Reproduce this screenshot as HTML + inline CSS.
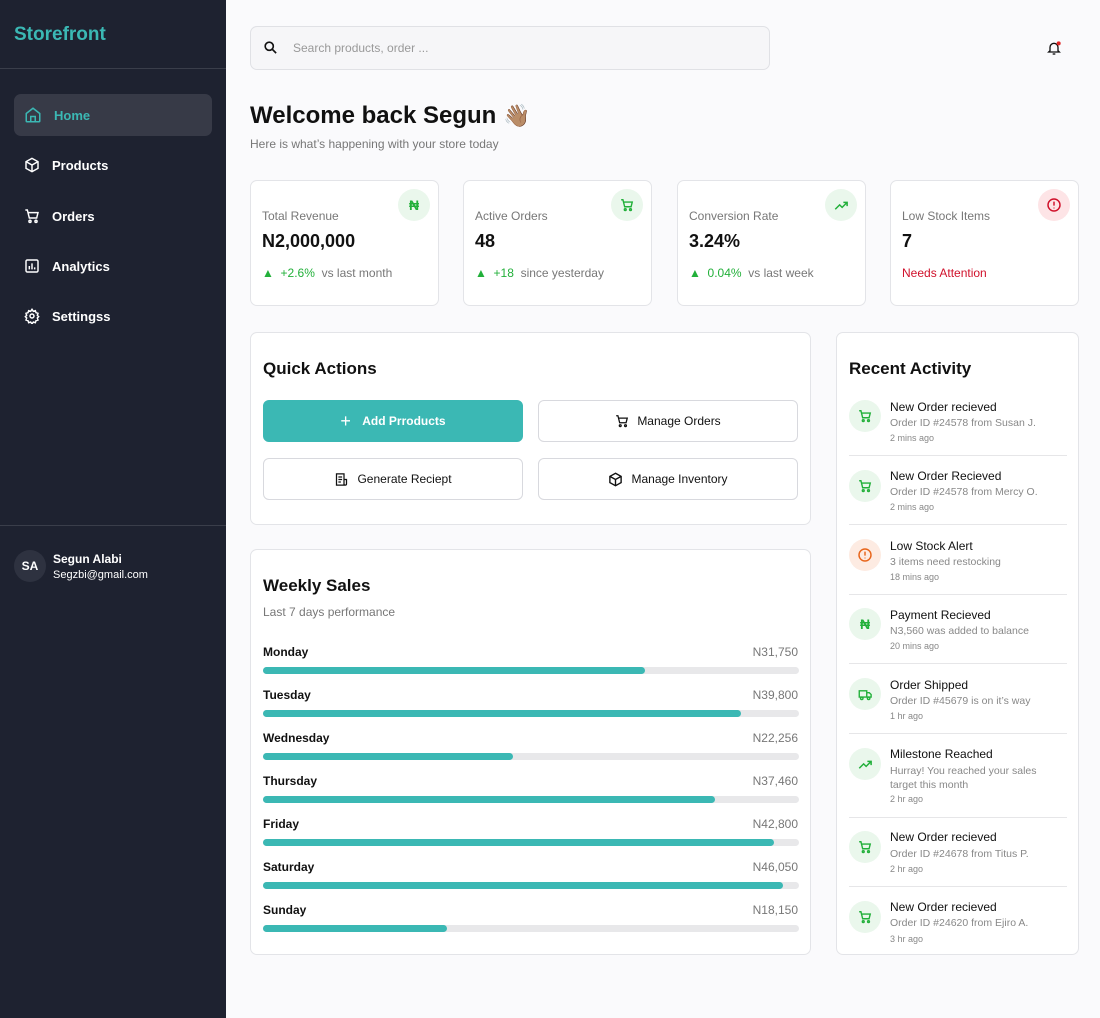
<!DOCTYPE html>
<html><head><meta charset="utf-8"><style>
*{box-sizing:border-box;margin:0;padding:0}
body{width:1100px;height:1018px;background:#fafafc;font-family:"Liberation Sans",sans-serif;color:#111;position:relative;overflow:hidden}
.sb{position:absolute;left:0;top:0;width:226px;height:1018px;background:#1e2230}
.logo{position:absolute;left:14px;top:24px;color:#3bb8b4;font-weight:bold;font-size:19px}
.hr{position:absolute;left:0;width:226px;height:1px;background:#3a3e4a}
.nav{position:absolute;left:14px;width:198px;height:42px;border-radius:7px;display:flex;align-items:center;padding-left:10px;color:#fff;font-weight:bold;font-size:13px}
.nav svg{margin-right:12px}
.nav.act{background:#373a47;color:#3bb8b4}
.card{position:absolute;background:#fff;border:1px solid #e3e4e8;border-radius:7px}
.abs{position:absolute}
.muted{color:#777}
.btn{position:absolute;width:260px;height:42px;border:1px solid #d8d9de;border-radius:6px;display:flex;align-items:center;justify-content:center;font-size:12px;gap:8px;background:#fff}
.ic{position:absolute;width:32px;height:32px;border-radius:50%;display:flex;align-items:center;justify-content:center}
.g{background:#eaf7ec;color:#22b03a}
.row .lbl{position:absolute;left:12px;font-size:12px;font-weight:bold}
.row .val{position:absolute;right:12px;font-size:12px;color:#777}
.track{position:absolute;left:12px;width:536px;height:7px;border-radius:4px;background:#e8e8ea}
.fill{height:7px;border-radius:4px;background:#3bb8b4}
.act{}
.ai{position:absolute;left:12px}
.at{position:absolute;left:53px;font-size:12px}
.as{position:absolute;left:53px;font-size:10.5px;color:#888;line-height:14px}
.ag{position:absolute;left:53px;font-size:9px;color:#888}
.dv{position:absolute;left:12px;width:218px;height:1px;background:#e6e6e8}
</style></head><body>
<div class="sb">
<div class="logo">Storefront</div>
<div class="hr" style="top:68px"></div>
<div class="nav act" style="top:94px"><svg width="18" height="18" viewBox="0 0 24 24" fill="none" stroke="#3bb8b4" stroke-width="2"><path d="M3 10l9-7 9 7v10a1 1 0 01-1 1H4a1 1 0 01-1-1z"/><path d="M9 21v-7h6v7"/></svg>Home</div>
<div class="nav" style="top:144px"><svg width="16" height="16" viewBox="0 0 24 24" fill="none" stroke="#fff" stroke-width="2.2"><path d="M12 2l9 5v10l-9 5-9-5V7z"/><path d="M3 7l9 5 9-5M12 12v10"/></svg>Products</div>
<div class="nav" style="top:195px"><svg width="16" height="16" viewBox="0 0 24 24" fill="none" stroke="#fff" stroke-width="2.2"><path d="M2 3h3l3 12h11l2-8H6"/><circle cx="9" cy="20" r="1.6"/><circle cx="18" cy="20" r="1.6"/></svg>Orders</div>
<div class="nav" style="top:245px"><svg width="16" height="16" viewBox="0 0 24 24" fill="none" stroke="#fff" stroke-width="2.2"><rect x="3" y="3" width="18" height="18" rx="2"/><path d="M8 17v-5M12 17V8M16 17v-3"/></svg>Analytics</div>
<div class="nav" style="top:295px"><svg width="16" height="16" viewBox="0 0 24 24" fill="none" stroke="#fff" stroke-width="2.2"><circle cx="12" cy="12" r="3"/><path d="M12 2l2 3 3-1 1 3 3 1-1 3 2 2-2 2 1 3-3 1-1 3-3-1-2 3-2-3-3 1-1-3-3-1 1-3-2-2 2-2-1-3 3-1 1-3 3 1z"/></svg>Settingss</div>
<div class="hr" style="top:525px"></div>
<div class="abs" style="left:14px;top:550px;width:32px;height:32px;border-radius:50%;background:#2e3240;color:#fff;font-weight:bold;font-size:12px;display:flex;align-items:center;justify-content:center">SA</div>
<div class="abs" style="left:53px;top:552px;color:#fff;font-weight:bold;font-size:12px">Segun Alabi</div>
<div class="abs" style="left:53px;top:569px;color:#fff;font-size:11px">Segzbi@gmail.com</div>
</div>

<div class="abs" style="left:250px;top:26px;width:520px;height:44px;border:1px solid #e0e1e5;border-radius:7px;background:#f6f6f8"></div>
<svg class="abs" style="left:263px;top:40px" width="15" height="15" viewBox="0 0 24 24" fill="none" stroke="#111" stroke-width="2.6"><circle cx="10" cy="10" r="6.5"/><path d="M15 15l6 6"/></svg>
<div class="abs" style="left:293px;top:41px;font-size:12px;color:#999">Search products, order ...</div>
<svg class="abs" style="left:1046px;top:40px" width="16" height="16" viewBox="0 0 24 24" fill="none" stroke="#111" stroke-width="2"><path d="M6 16V11a6 6 0 0112 0v5l2 2H4z"/><path d="M10 21h4"/><circle cx="19" cy="5" r="3" fill="#e02424" stroke="none"/></svg>

<div class="abs" style="left:250px;top:102px;font-size:24px;font-weight:bold">Welcome back Segun <span style="font-size:22px">👋🏽</span></div>
<div class="abs muted" style="left:250px;top:137px;font-size:12px">Here is what’s happening with your store today</div>

<div class="card" style="left:250px;top:180px;width:189px;height:126px">
<div class="ic g" style="left:147px;top:8px;font-weight:bold;font-size:14px">₦</div>
<div class="abs muted" style="left:11px;top:28px;font-size:12px">Total Revenue</div>
<div class="abs" style="left:11px;top:50px;font-size:18px;font-weight:bold">N2,000,000</div>
<div class="abs" style="left:11px;top:85px;font-size:12px"><span style="color:#22b03a">▲ &nbsp;+2.6%</span> <span class="muted">&nbsp;vs last month</span></div></div>
<div class="card" style="left:463px;top:180px;width:189px;height:126px">
<div class="ic g" style="left:147px;top:8px"><svg width="14" height="14" viewBox="0 0 24 24" fill="none" stroke="#22b03a" stroke-width="2.4"><path d="M2 3h3l3 12h11l2-8H6"/><circle cx="9" cy="20" r="1.6"/><circle cx="18" cy="20" r="1.6"/></svg></div>
<div class="abs muted" style="left:11px;top:28px;font-size:12px">Active Orders</div>
<div class="abs" style="left:11px;top:50px;font-size:18px;font-weight:bold">48</div>
<div class="abs" style="left:11px;top:85px;font-size:12px"><span style="color:#22b03a">▲ &nbsp;+18</span> <span class="muted">&nbsp;since yesterday</span></div></div>
<div class="card" style="left:677px;top:180px;width:189px;height:126px">
<div class="ic g" style="left:147px;top:8px"><svg width="15" height="15" viewBox="0 0 24 24" fill="none" stroke="#22b03a" stroke-width="2.4"><path d="M2 18l7-7 4 4 8-8M15 7h6v6"/></svg></div>
<div class="abs muted" style="left:11px;top:28px;font-size:12px">Conversion Rate</div>
<div class="abs" style="left:11px;top:50px;font-size:18px;font-weight:bold">3.24%</div>
<div class="abs" style="left:11px;top:85px;font-size:12px"><span style="color:#22b03a">▲ &nbsp;0.04%</span> <span class="muted">&nbsp;vs last week</span></div></div>
<div class="card" style="left:890px;top:180px;width:189px;height:126px">
<div class="ic" style="left:147px;top:8px;background:#fde4e6"><svg width="16" height="16" viewBox="0 0 24 24" fill="none" stroke="#d0112b" stroke-width="2.2"><circle cx="12" cy="12" r="9"/><path d="M12 7v6M12 16v1"/></svg></div>
<div class="abs muted" style="left:11px;top:28px;font-size:12px">Low Stock Items</div>
<div class="abs" style="left:11px;top:50px;font-size:18px;font-weight:bold">7</div>
<div class="abs" style="left:11px;top:85px;font-size:12px;color:#d0112b">Needs Attention</div></div>

<div class="card" style="left:250px;top:332px;width:561px;height:193px">
<div class="abs" style="left:12px;top:26px;font-size:17px;font-weight:bold">Quick Actions</div>
<div class="btn" style="left:12px;top:67px;background:#3bb8b4;border-color:#3bb8b4;color:#fff;font-weight:bold"><span style="font-size:18px;font-weight:normal">+</span>&nbsp;Add Prroducts</div>
<div class="btn" style="left:287px;top:67px"><svg width="14" height="14" viewBox="0 0 24 24" fill="none" stroke="#111" stroke-width="2.2"><path d="M2 3h3l3 12h11l2-8H6"/><circle cx="9" cy="20" r="1.6"/><circle cx="18" cy="20" r="1.6"/></svg>Manage Orders</div>
<div class="btn" style="left:12px;top:125px"><svg width="15" height="15" viewBox="0 0 24 24" fill="none" stroke="#111" stroke-width="2"><path d="M4 3h12v18H4zM16 12h4v7a2 2 0 01-4 0M7 8h6M7 12h6M7 16h4"/></svg>Generate Reciept</div>
<div class="btn" style="left:287px;top:125px"><svg width="15" height="15" viewBox="0 0 24 24" fill="none" stroke="#111" stroke-width="2.2"><path d="M12 2l9 5v10l-9 5-9-5V7z"/><path d="M3 7l9 5 9-5M12 12v10"/></svg>Manage Inventory</div>
</div>

<div class="card" style="left:250px;top:549px;width:561px;height:406px">
<div class="abs" style="left:12px;top:26px;font-size:17px;font-weight:bold">Weekly Sales</div>
<div class="abs muted" style="left:12px;top:55px;font-size:12px">Last 7 days performance</div>
<div class="row">
<div class="lbl" style="top:95px">Monday</div><div class="val" style="top:95px">N31,750</div><div class="track" style="top:117px"><div class="fill" style="width:382px"></div></div>
<div class="lbl" style="top:138px">Tuesday</div><div class="val" style="top:138px">N39,800</div><div class="track" style="top:160px"><div class="fill" style="width:478px"></div></div>
<div class="lbl" style="top:181px">Wednesday</div><div class="val" style="top:181px">N22,256</div><div class="track" style="top:203px"><div class="fill" style="width:250px"></div></div>
<div class="lbl" style="top:224px">Thursday</div><div class="val" style="top:224px">N37,460</div><div class="track" style="top:246px"><div class="fill" style="width:452px"></div></div>
<div class="lbl" style="top:267px">Friday</div><div class="val" style="top:267px">N42,800</div><div class="track" style="top:289px"><div class="fill" style="width:511px"></div></div>
<div class="lbl" style="top:310px">Saturday</div><div class="val" style="top:310px">N46,050</div><div class="track" style="top:332px"><div class="fill" style="width:520px"></div></div>
<div class="lbl" style="top:353px">Sunday</div><div class="val" style="top:353px">N18,150</div><div class="track" style="top:375px"><div class="fill" style="width:184px"></div></div>
</div></div>

<div class="card" style="left:836px;top:332px;width:243px;height:623px">
<div class="abs" style="left:12px;top:26px;font-size:17px;font-weight:bold">Recent Activity</div>
<!-- cart svg def reused inline -->
<div class="ic g ai" style="top:67px"><svg width="14" height="14" viewBox="0 0 24 24" fill="none" stroke="#22b03a" stroke-width="2.4"><path d="M2 3h3l3 12h11l2-8H6"/><circle cx="9" cy="20" r="1.6"/><circle cx="18" cy="20" r="1.6"/></svg></div>
<div class="at" style="top:67px">New Order recieved</div><div class="as" style="top:83px">Order ID #24578 from Susan J.</div><div class="ag" style="top:100px">2 mins ago</div>
<div class="dv" style="top:122px"></div>
<div class="ic g ai" style="top:137px"><svg width="14" height="14" viewBox="0 0 24 24" fill="none" stroke="#22b03a" stroke-width="2.4"><path d="M2 3h3l3 12h11l2-8H6"/><circle cx="9" cy="20" r="1.6"/><circle cx="18" cy="20" r="1.6"/></svg></div>
<div class="at" style="top:136px">New Order Recieved</div><div class="as" style="top:152px">Order ID #24578 from Mercy O.</div><div class="ag" style="top:169px">2 mins ago</div>
<div class="dv" style="top:191px"></div>
<div class="ic ai" style="top:206px;background:#fdebe2"><svg width="16" height="16" viewBox="0 0 24 24" fill="none" stroke="#e8661c" stroke-width="2.2"><circle cx="12" cy="12" r="9"/><path d="M12 7v6M12 16v1"/></svg></div>
<div class="at" style="top:206px">Low Stock Alert</div><div class="as" style="top:222px">3 items need restocking</div><div class="ag" style="top:239px">18 mins ago</div>
<div class="dv" style="top:261px"></div>
<div class="ic g ai" style="top:275px;font-weight:bold;font-size:14px">₦</div>
<div class="at" style="top:275px">Payment Recieved</div><div class="as" style="top:291px">N3,560 was added to balance</div><div class="ag" style="top:308px">20 mins ago</div>
<div class="dv" style="top:330px"></div>
<div class="ic g ai" style="top:345px"><svg width="15" height="15" viewBox="0 0 24 24" fill="none" stroke="#22b03a" stroke-width="2.2"><path d="M2 6h12v10H2zM14 9h4l3 3v4h-7"/><circle cx="6" cy="18" r="2"/><circle cx="17" cy="18" r="2"/></svg></div>
<div class="at" style="top:345px">Order Shipped</div><div class="as" style="top:361px">Order ID #45679 is on it’s way</div><div class="ag" style="top:378px">1 hr ago</div>
<div class="dv" style="top:400px"></div>
<div class="ic g ai" style="top:415px"><svg width="15" height="15" viewBox="0 0 24 24" fill="none" stroke="#22b03a" stroke-width="2.4"><path d="M2 18l7-7 4 4 8-8M15 7h6v6"/></svg></div>
<div class="at" style="top:414px">Milestone Reached</div><div class="as" style="top:431px">Hurray! You reached your sales<br>target this month</div><div class="ag" style="top:461px">2 hr ago</div>
<div class="dv" style="top:484px"></div>
<div class="ic g ai" style="top:498px"><svg width="14" height="14" viewBox="0 0 24 24" fill="none" stroke="#22b03a" stroke-width="2.4"><path d="M2 3h3l3 12h11l2-8H6"/><circle cx="9" cy="20" r="1.6"/><circle cx="18" cy="20" r="1.6"/></svg></div>
<div class="at" style="top:497px">New Order recieved</div><div class="as" style="top:514px">Order ID #24678 from Titus P.</div><div class="ag" style="top:531px">2 hr ago</div>
<div class="dv" style="top:553px"></div>
<div class="ic g ai" style="top:568px"><svg width="14" height="14" viewBox="0 0 24 24" fill="none" stroke="#22b03a" stroke-width="2.4"><path d="M2 3h3l3 12h11l2-8H6"/><circle cx="9" cy="20" r="1.6"/><circle cx="18" cy="20" r="1.6"/></svg></div>
<div class="at" style="top:567px">New Order recieved</div><div class="as" style="top:583px">Order ID #24620 from Ejiro A.</div><div class="ag" style="top:601px">3 hr ago</div>
</div>
</body></html>
